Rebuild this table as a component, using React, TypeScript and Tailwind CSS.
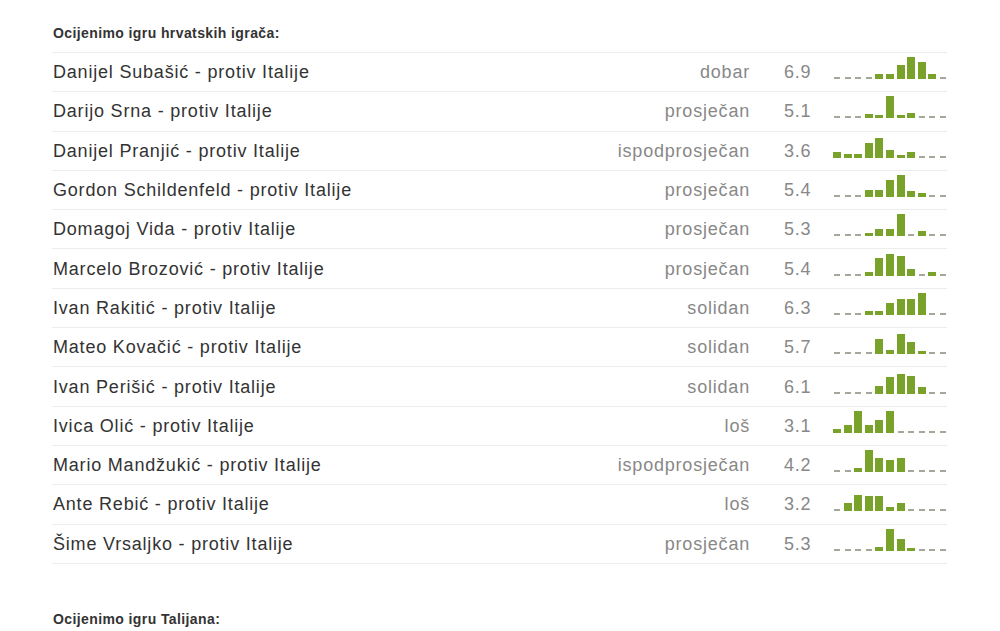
import React from 'react';

type Rating = {
  name: string;
  label: string;
  score: string;
  votes: number[];
};

const croatians: Rating[] = [
  { name: 'Danijel Subašić - protiv Italije', label: 'dobar', score: '6.9', votes: [0, 0, 0, 0, 5, 5, 14, 22, 17, 5, 0] },
  { name: 'Darijo Srna - protiv Italije', label: 'prosječan', score: '5.1', votes: [0, 0, 0, 4, 3, 22, 3, 5, 0, 0, 0] },
  { name: 'Danijel Pranjić - protiv Italije', label: 'ispodprosječan', score: '3.6', votes: [6, 4, 4, 15, 20, 8, 3, 6, 0, 0, 0] },
  { name: 'Gordon Schildenfeld - protiv Italije', label: 'prosječan', score: '5.4', votes: [0, 0, 0, 7, 7, 17, 22, 6, 4, 0, 0] },
  { name: 'Domagoj Vida - protiv Italije', label: 'prosječan', score: '5.3', votes: [0, 0, 0, 3, 7, 7, 22, 0, 5, 0, 0] },
  { name: 'Marcelo Brozović - protiv Italije', label: 'prosječan', score: '5.4', votes: [0, 0, 0, 4, 18, 22, 20, 7, 0, 4, 0] },
  { name: 'Ivan Rakitić - protiv Italije', label: 'solidan', score: '6.3', votes: [0, 0, 0, 4, 4, 12, 16, 16, 22, 0, 0] },
  { name: 'Mateo Kovačić - protiv Italije', label: 'solidan', score: '5.7', votes: [0, 0, 0, 0, 15, 4, 20, 12, 3, 0, 0] },
  { name: 'Ivan Perišić - protiv Italije', label: 'solidan', score: '6.1', votes: [0, 0, 0, 0, 8, 17, 20, 18, 7, 0, 0] },
  { name: 'Ivica Olić - protiv Italije', label: 'loš', score: '3.1', votes: [4, 8, 22, 8, 13, 22, 0, 0, 0, 0, 0] },
  { name: 'Mario Mandžukić - protiv Italije', label: 'ispodprosječan', score: '4.2', votes: [0, 0, 4, 22, 14, 12, 14, 0, 0, 0, 0] },
  { name: 'Ante Rebić - protiv Italije', label: 'loš', score: '3.2', votes: [0, 8, 16, 15, 15, 4, 8, 0, 0, 0, 0] },
  { name: 'Šime Vrsaljko - protiv Italije', label: 'prosječan', score: '5.3', votes: [0, 0, 0, 0, 4, 22, 12, 3, 0, 0, 0] },
];

const font = { fontFamily: '"Liberation Sans", Arial, sans-serif' };

// one slot per grade 0-10, empty grades drawn as a grey dash
const Spark = ({ votes }: { votes: number[] }) => (
  <div className="flex items-end gap-[2.6px] w-[114px] h-[22px] ml-[22px] mb-[8px] shrink-0">
    {votes.map((v, i) =>
      v === 0 ? (
        <div key={i} className="flex-1 flex justify-center">
          <div className="w-[6px] h-[2px] bg-[#a3a89a]" />
        </div>
      ) : (
        <div key={i} className="flex-1 bg-[#79a22a]" style={{ height: v }} />
      ),
    )}
  </div>
);

const Row = ({ r }: { r: Rating }) => (
  <div className="flex items-center h-[39.3px] border-b border-[#ececec] text-[18px] tracking-[0.8px] leading-[22px]">
    <span className="flex-1 pl-px text-[#333]">{r.name}</span>
    <span className="text-right text-[#888]">{r.label}</span>
    <span className="ml-[34px] w-[27px] text-[#888]">{r.score}</span>
    <Spark votes={r.votes} />
  </div>
);

export default function App() {
  return (
    <div className="bg-white min-h-[631px] overflow-hidden" style={font}>
      <div className="ml-[52px] w-[895px]">
        <h2 className="pt-[24px] pb-[10px] pl-px text-[14px] leading-[18px] tracking-[0.4px] font-bold text-[#333]">
          Ocijenimo igru hrvatskih igrača:
        </h2>
        <div className="border-t border-[#ececec]">
          {croatians.map((r) => (
            <Row key={r.name} r={r} />
          ))}
        </div>
        <h2 className="mt-[46px] pl-px text-[14px] leading-[18px] tracking-[0.4px] font-bold text-[#333]">
          Ocijenimo igru Talijana:
        </h2>
      </div>
    </div>
  );
}
